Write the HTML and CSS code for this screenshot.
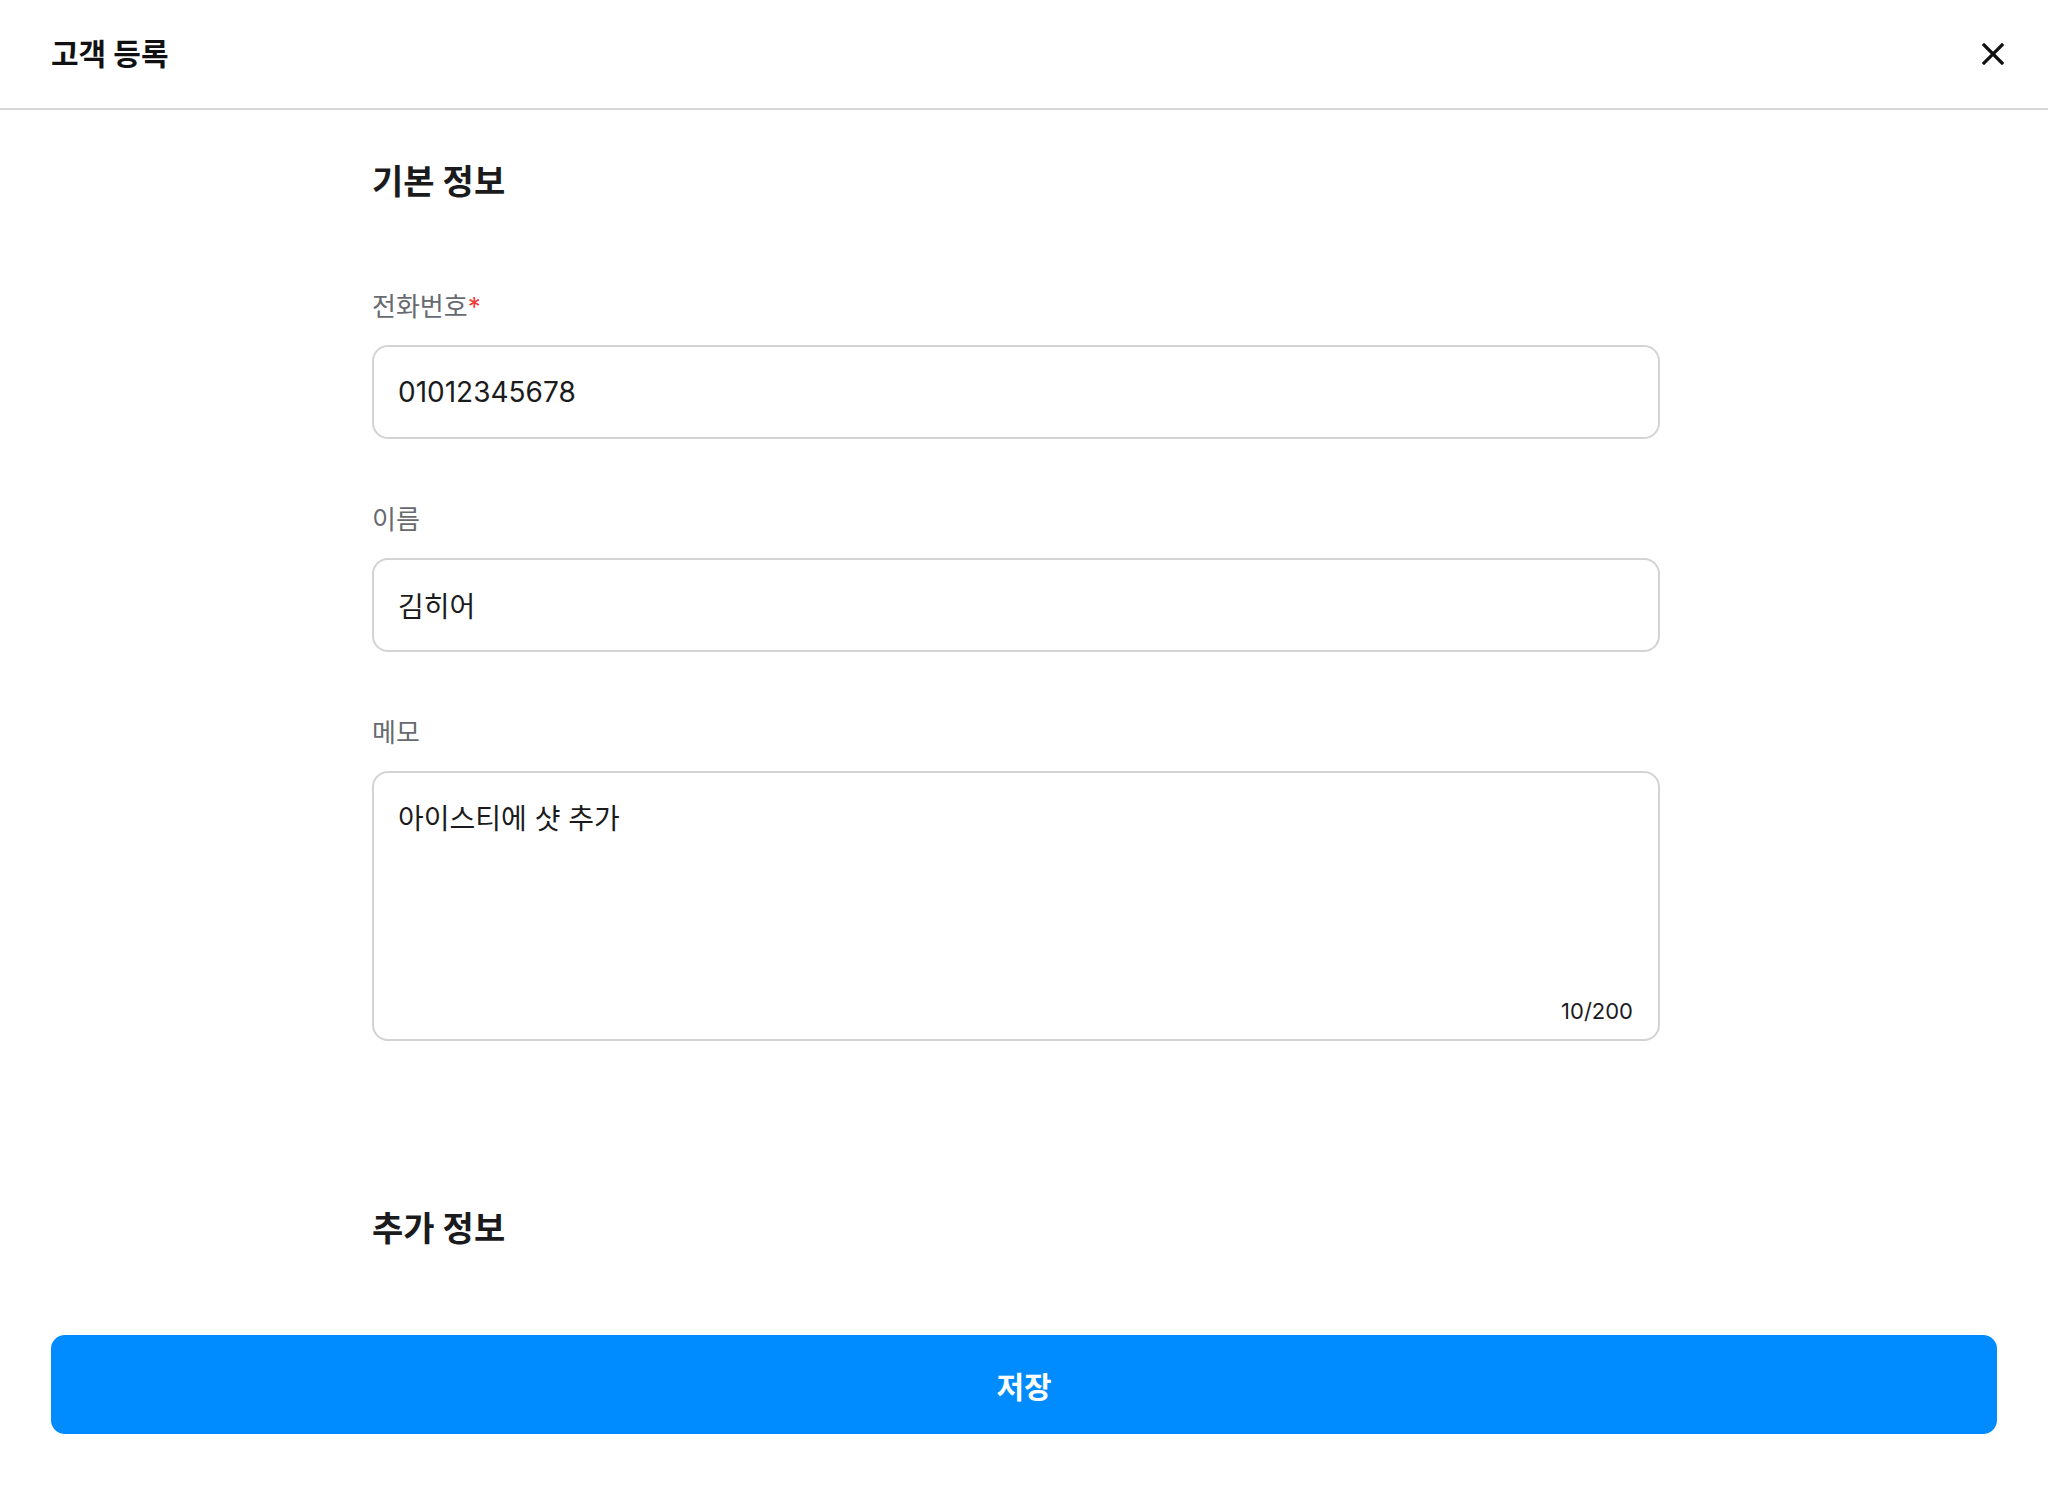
FILE: index.html
```html
<!DOCTYPE html>
<html lang="ko">
<head>
<meta charset="utf-8">
<title>고객 등록</title>
<link rel="stylesheet" href="styles.css">
</head>
<body>
<div class="page">
  <header class="header">
    <h1 class="header-title">고객 등록</h1>
    <button class="close" aria-label="닫기">
      <svg width="22" height="22" viewBox="0 0 22 22" aria-hidden="true">
        <path d="M2 2 L20 20 M20 2 L2 20" stroke="#111" stroke-width="3.2" stroke-linecap="square" fill="none"/>
      </svg>
    </button>
  </header>

  <main class="content">
    <section class="section">
      <h2 class="section-title">기본 정보</h2>

      <div class="field first">
        <label class="label">전화번호<span class="req">*</span></label>
        <input class="input" type="text" value="01012345678">
      </div>

      <div class="field">
        <label class="label">이름</label>
        <input class="input" type="text" value="김히어">
      </div>

      <div class="field">
        <label class="label">메모</label>
        <div class="textarea-wrap">
          <textarea class="textarea">아이스티에 샷 추가</textarea>
          <span class="counter">10/200</span>
        </div>
      </div>
    </section>

    <section class="section extra">
      <h2 class="section-title">추가 정보</h2>
    </section>
  </main>

  <footer class="footer">
    <button class="save">저장</button>
  </footer>
</div>
</body>
</html>
```

FILE: styles.css
```css
* { box-sizing: border-box; }

html, body {
  margin: 0;
  padding: 0;
  background: #ffffff;
}

body {
  font-family: Inter, "Noto Sans CJK KR", sans-serif;
  color: #1b1b1d;
}

.page {
  width: 2048px;
  min-height: 1498px;
  display: flex;
  flex-direction: column;
}

.header {
  height: 110px;
  border-bottom: 2px solid #d6d6d6;
  display: flex;
  align-items: center;
  justify-content: space-between;
  padding: 0 44px 0 51px;
}

.header-title {
  margin: 0;
  font-size: 30px;
  font-weight: 700;
  line-height: 40px;
  color: #111113;
}

.close {
  border: 0;
  background: none;
  padding: 0;
  width: 22px;
  height: 22px;
  display: flex;
  cursor: pointer;
}

.content {
  padding: 50px 0 0 372px;
  width: 1660px;
}

.section-title {
  margin: 0;
  font-size: 34px;
  font-weight: 700;
  line-height: 44px;
  color: #1b1b1d;
}

.field {
  display: flex;
  flex-direction: column;
  gap: 20px;
  margin-top: 63px;
}

.field.first {
  margin-top: 85px;
}

.label {
  font-size: 26px;
  line-height: 36px;
  color: #676a70;
}

.req {
  color: #f03c3c;
}

.input {
  width: 1288px;
  height: 94px;
  border: 2px solid #d3d3d3;
  border-radius: 16px;
  padding: 0 24px;
  font-family: Inter, "Noto Sans CJK KR", sans-serif;
  font-size: 28px;
  color: #1b1b1d;
  background: #fff;
  outline: none;
}

.textarea-wrap {
  position: relative;
  width: 1288px;
  height: 270px;
}

.textarea {
  width: 100%;
  height: 100%;
  border: 2px solid #d3d3d3;
  border-radius: 16px;
  padding: 27px 24px 24px;
  font-family: Inter, "Noto Sans CJK KR", sans-serif;
  font-size: 28px;
  line-height: 38px;
  color: #1b1b1d;
  resize: none;
  outline: none;
  display: block;
}

.counter {
  position: absolute;
  right: 27px;
  bottom: 16px;
  font-size: 22px;
  line-height: 28px;
  color: #1b1b1d;
}

.section.extra {
  margin-top: 166px;
}

.footer {
  padding: 84px 51px 0 51px;
}

.save {
  width: 100%;
  height: 99px;
  border: 0;
  border-radius: 14px;
  background: #008cff;
  color: #ffffff;
  font-family: Inter, "Noto Sans CJK KR", sans-serif;
  font-size: 30px;
  font-weight: 600;
  cursor: pointer;
}
```
